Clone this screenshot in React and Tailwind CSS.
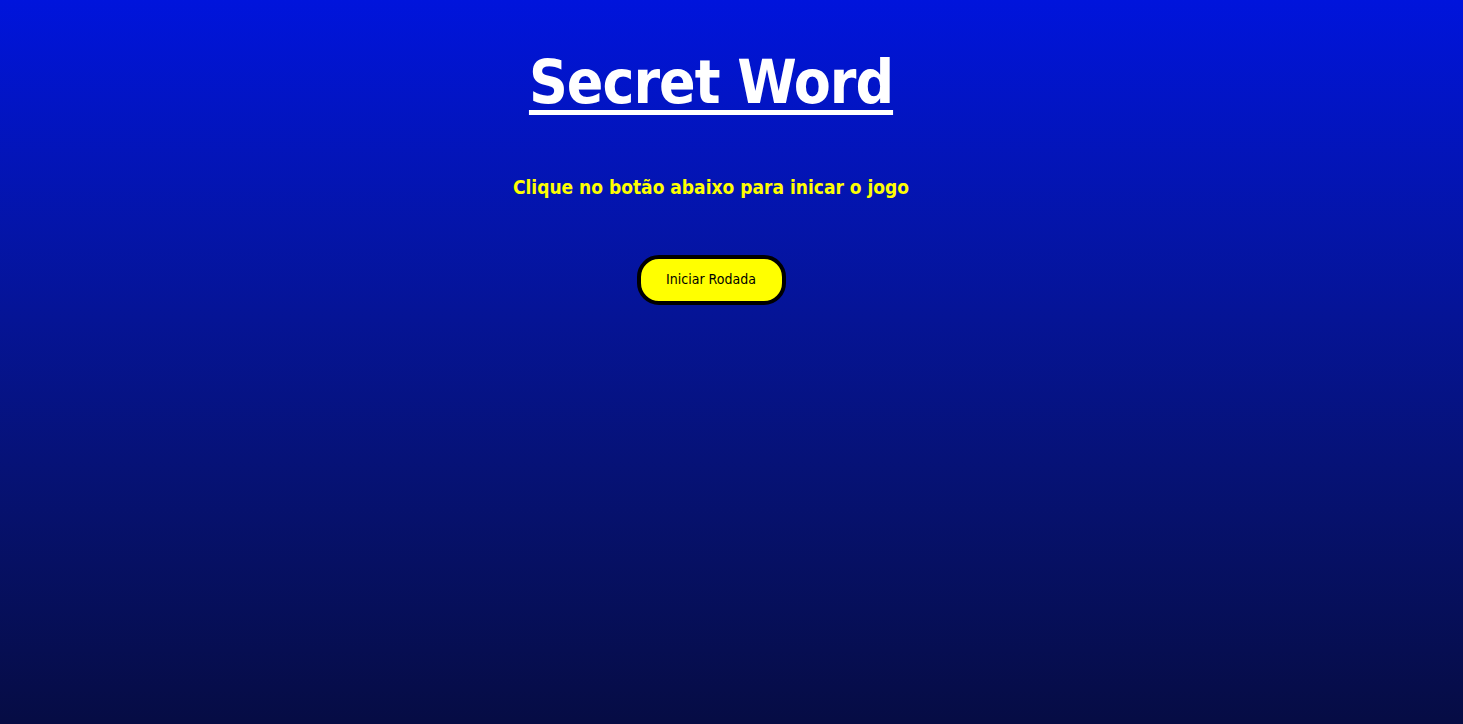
export default function App() {
  return (
    <div
      className="min-h-screen w-full bg-gradient-to-b from-[#0014dc] to-[#060c44] pr-[41px]"
      style={{ fontFamily: '"DejaVu Sans Condensed", "DejaVu Sans", sans-serif' }}
    >
      <div className="flex flex-col items-center pt-[44px]">
        <h1 className="text-[60px] leading-[76px] font-bold tracking-[-1px] text-white underline decoration-[5px] underline-offset-[7px]">
          Secret Word
        </h1>
        <p className="mt-[53px] text-[19px] font-bold text-[#ffff00]">
          Clique no botão abaixo para inicar o jogo
        </p>
        <button className="mt-[53px] h-[50px] w-[149px] rounded-[22px] border-4 border-black bg-[#ffff00] text-[14px] text-black">
          Iniciar Rodada
        </button>
      </div>
    </div>
  );
}
